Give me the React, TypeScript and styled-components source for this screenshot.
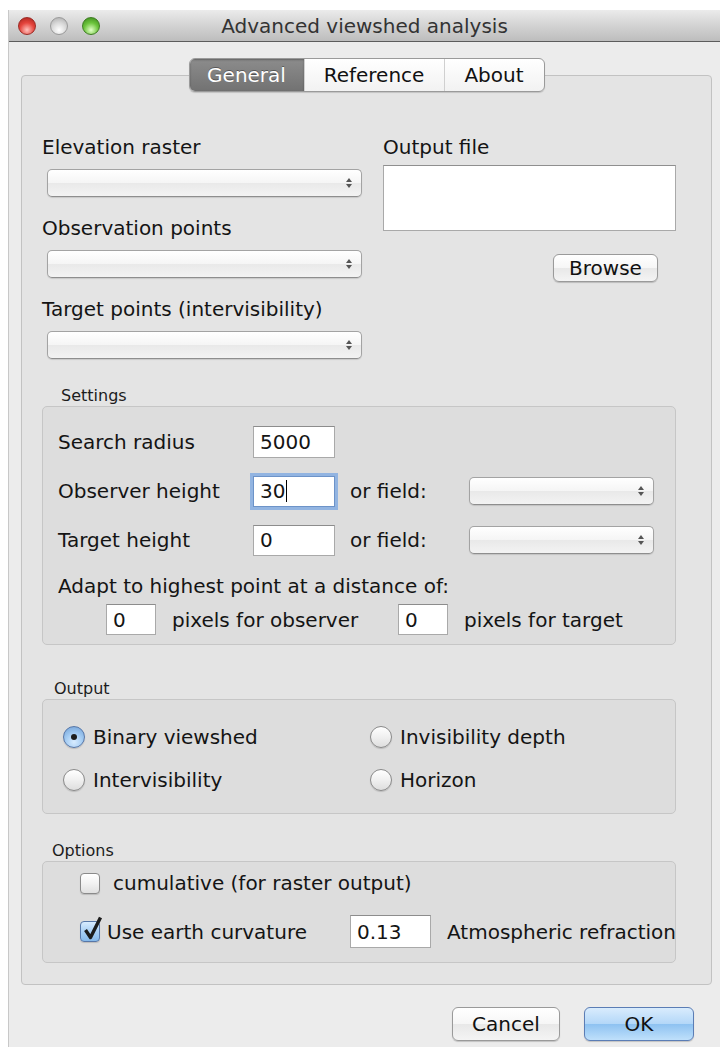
import React from 'react';
import styled, {createGlobalStyle, css} from 'styled-components';

const GlobalStyle = createGlobalStyle`
  html, body {
    margin: 0;
    padding: 0;
    background: #ffffff;
  }
  body {
    font-family: "DejaVu Sans", "Liberation Sans", sans-serif;
    color: #141414;
  }
`;

const Window = styled.div`
  margin: 10px 0 0 9px;
  width: 711px;
  height: 1037px;
  background: #ececec;
  box-shadow: -1px 0 0 #c8c8c8;
  display: flex;
  flex-direction: column;
`;

const TitleBar = styled.div`
  height: 31px;
  display: flex;
  align-items: center;
  position: relative;
  background: linear-gradient(#ebebeb, #d3d3d3 50%, #bdbdbd);
  border-bottom: 1px solid #5c5c5c;
  padding-left: 9px;
  gap: 14px;
`;

const Light = styled.span<{tone: 'close' | 'idle' | 'zoom'}>`
  width: 18px;
  height: 18px;
  border-radius: 50%;
  box-sizing: border-box;
  ${p => p.tone === 'close' && css`
    background: radial-gradient(circle at 50% 75%, #ffc2bd, #e5453d 50%, #a6201a);
    border: 1px solid #9c2b25;
  `}
  ${p => p.tone === 'idle' && css`
    background: radial-gradient(circle at 50% 75%, #ffffff, #d9d9d9 50%, #a9a9a9);
    border: 1px solid #9a9a9a;
  `}
  ${p => p.tone === 'zoom' && css`
    background: radial-gradient(circle at 50% 75%, #e2ffc8, #6cc43c 50%, #38851a);
    border: 1px solid #3e7d22;
  `}
`;

const Title = styled.div`
  position: absolute;
  left: 0;
  right: 0;
  text-align: center;
  font-size: 20px;
  color: #333;
  pointer-events: none;
`;

const Body = styled.div`
  flex: 1;
  display: flex;
  flex-direction: column;
  padding: 16px 8px 0 12px;
`;

const TabStrip = styled.div`
  display: flex;
  justify-content: center;
  position: relative;
  z-index: 1;
`;

const Segments = styled.div`
  display: flex;
  height: 34px;
  box-sizing: border-box;
  border: 1px solid #9a9a9a;
  border-radius: 6px;
  overflow: hidden;
  background: linear-gradient(#ffffff, #f2f2f2);
  box-shadow: 0 1px 1px rgba(0, 0, 0, 0.15);
`;

const Segment = styled.div<{width: number; active?: boolean}>`
  width: ${p => p.width}px;
  display: flex;
  align-items: center;
  justify-content: center;
  font-size: 20px;
  color: #111;
  & + & {
    border-left: 1px solid #d0d0d0;
  }
  ${p => p.active && css`
    background: linear-gradient(#8c8c8c, #727272);
    color: #ffffff;
    text-shadow: 0 -1px 0 rgba(0, 0, 0, 0.35);
    box-shadow: inset 0 1px 2px rgba(0, 0, 0, 0.3);
  `}
`;

const TabBox = styled.div`
  margin-top: -17px;
  height: 910px;
  box-sizing: border-box;
  background: #e4e4e4;
  border: 1px solid #c2c2c2;
  border-radius: 4px;
  padding: 60px 35px 0 20px;
`;

const TopArea = styled.div`
  display: grid;
  grid-template-columns: 320px 293px;
  column-gap: 21px;
`;

const Column = styled.div`
  display: flex;
  flex-direction: column;
`;

const FieldLabel = styled.div<{gap?: number}>`
  font-size: 20px;
  line-height: 22px;
  margin-top: ${p => p.gap ?? 0}px;
  white-space: nowrap;
`;

const PopUp = styled.div<{width: number; gap?: number; inset?: number}>`
  width: ${p => p.width}px;
  height: 28px;
  box-sizing: border-box;
  margin-top: ${p => p.gap ?? 0}px;
  margin-left: ${p => p.inset ?? 0}px;
  border: 1px solid #a3a3a3;
  border-bottom-color: #8e8e8e;
  border-radius: 5px;
  background: linear-gradient(#ffffff, #f5f5f5 50%, #e9e9e9 51%, #f3f3f3);
  box-shadow: 0 1px 1px rgba(0, 0, 0, 0.12);
  display: flex;
  align-items: center;
  justify-content: flex-end;
  padding-right: 8px;
`;

const Stepper = () => (
  <svg width="8" height="12" viewBox="0 0 8 12">
    <path d="M4 1 L7 5 L1 5 Z" fill="#555"/>
    <path d="M4 11 L7 7 L1 7 Z" fill="#555"/>
  </svg>
);

const FileBox = styled.div`
  margin-top: 7px;
  height: 64px;
  background: #ffffff;
  border: 1px solid #a9a9a9;
  border-top-color: #8f8f8f;
`;

const PushButton = styled.button<{width: number; height: number; primary?: boolean}>`
  width: ${p => p.width}px;
  height: ${p => p.height}px;
  font-family: inherit;
  font-size: 20px;
  color: #111;
  border: 1px solid #9a9a9a;
  border-radius: 6px;
  background: linear-gradient(#ffffff, #f6f6f6 50%, #e8e8e8 51%, #f4f4f4);
  box-shadow: 0 1px 1px rgba(0, 0, 0, 0.18);
  padding: 0;
  ${p => p.primary && css`
    border-color: #5b7db5;
    background: linear-gradient(#d9ecfd, #b3d7f8 50%, #8ec2f1 51%, #bfe0fb);
  `}
`;

const BrowseRow = styled.div`
  display: flex;
  justify-content: flex-end;
  margin-top: 23px;
  padding-right: 18px;
`;

const GroupTitle = styled.div<{gap: number; indent: number}>`
  font-size: 16px;
  line-height: 18px;
  margin-top: ${p => p.gap}px;
  padding-left: ${p => p.indent}px;
  color: #1c1c1c;
`;

const GroupBox = styled.div`
  margin-top: 1px;
  background: #dddddd;
  border: 1px solid #c6c6c6;
  border-radius: 5px;
`;

const SettingsBox = styled(GroupBox)`
  padding: 19px 21px 9px 15px;
`;

const SettingsGrid = styled.div`
  display: grid;
  grid-template-columns: 195px 82px 134px 185px;
  grid-auto-rows: 32px;
  row-gap: 17px;
  align-items: center;
`;

const RowLabel = styled.div<{pad?: number}>`
  font-size: 20px;
  line-height: 22px;
  padding-left: ${p => p.pad ?? 0}px;
  white-space: nowrap;
`;

const TextField = styled.div<{width: number; height: number; focused?: boolean}>`
  width: ${p => p.width}px;
  height: ${p => p.height}px;
  box-sizing: border-box;
  background: #ffffff;
  border: 1px solid #a9a9a9;
  border-top-color: #8c8c8c;
  font-size: 20px;
  padding-left: 6px;
  display: flex;
  align-items: center;
  ${p => p.focused && css`
    border-color: #6d93c8;
    box-shadow: 0 0 0 3px rgba(120, 165, 225, 0.75);
  `}
`;

const Caret = styled.span`
  display: inline-block;
  width: 1px;
  height: 22px;
  margin-left: 1px;
  background: #000;
`;

const AdaptText = styled.div`
  font-size: 20px;
  line-height: 22px;
  margin-top: 19px;
`;

const AdaptRow = styled.div`
  display: grid;
  grid-template-columns: 50px 210px 50px auto;
  column-gap: 16px;
  align-items: center;
  margin-top: 7px;
  padding-left: 48px;
`;

const OutputBox = styled(GroupBox)`
  padding: 25px 0 21px 20px;
  display: grid;
  grid-template-columns: 307px auto;
  grid-auto-rows: 24px;
  row-gap: 19px;
`;

const RadioItem = styled.div`
  display: flex;
  align-items: center;
  gap: 8px;
  font-size: 20px;
`;

const RadioDot = styled.span<{checked?: boolean}>`
  width: 22px;
  height: 22px;
  box-sizing: border-box;
  border-radius: 50%;
  border: 1px solid #8a8a8a;
  background: linear-gradient(#ffffff, #f0f0f0 50%, #dedede);
  box-shadow: 0 1px 1px rgba(0, 0, 0, 0.15);
  display: flex;
  align-items: center;
  justify-content: center;
  ${p => p.checked && css`
    border-color: #5777a8;
    background: radial-gradient(circle at 50% 75%, #d8ecff, #a6cdf3 45%, #6e9fd6);
    &::after {
      content: '';
      width: 6px;
      height: 6px;
      border-radius: 50%;
      background: #1d1d1d;
    }
  `}
`;

const OptionsBox = styled(GroupBox)`
  padding: 9px 0 14px 37px;
  display: flex;
  flex-direction: column;
  gap: 20px;
`;

const OptionRow = styled.div<{gap: number}>`
  display: flex;
  align-items: center;
  gap: ${p => p.gap}px;
  font-size: 20px;
  min-height: 22px;
  white-space: nowrap;
`;

const CurvatureRow = styled.div`
  display: grid;
  grid-template-columns: 270px 81px auto;
  align-items: center;
  font-size: 20px;
`;

const Check = styled.span<{checked?: boolean}>`
  position: relative;
  width: 20px;
  height: 21px;
  box-sizing: border-box;
  border-radius: 4px;
  border: 1px solid #8a8a8a;
  background: linear-gradient(#ffffff, #f2f2f2 50%, #e0e0e0);
  box-shadow: 0 1px 1px rgba(0, 0, 0, 0.15);
  flex: none;
  ${p => p.checked && css`
    border-color: #5777a8;
    background: linear-gradient(#d8ecff, #a9cff4 50%, #86b9ea);
  `}
`;

const Tick = styled.svg`
  position: absolute;
  left: 2px;
  top: -6px;
`;

const Footer = styled.div`
  display: flex;
  justify-content: flex-end;
  gap: 24px;
  margin-top: 22px;
  padding-right: 18px;
`;

function App() {
  return (
    <>
      <GlobalStyle/>
      <Window>
        <TitleBar>
          <Light tone="close"/>
          <Light tone="idle"/>
          <Light tone="zoom"/>
          <Title>Advanced viewshed analysis</Title>
        </TitleBar>
        <Body>
          <TabStrip>
            <Segments>
              <Segment width={114} active>General</Segment>
              <Segment width={139}>Reference</Segment>
              <Segment width={99}>About</Segment>
            </Segments>
          </TabStrip>
          <TabBox>
            <TopArea>
              <Column>
                <FieldLabel>Elevation raster</FieldLabel>
                <PopUp width={315} gap={11} inset={5}><Stepper/></PopUp>
                <FieldLabel gap={20}>Observation points</FieldLabel>
                <PopUp width={315} gap={11} inset={5}><Stepper/></PopUp>
                <FieldLabel gap={20}>Target points (intervisibility)</FieldLabel>
                <PopUp width={315} gap={11} inset={5}><Stepper/></PopUp>
              </Column>
              <Column>
                <FieldLabel>Output file</FieldLabel>
                <FileBox/>
                <BrowseRow>
                  <PushButton width={105} height={28}>Browse</PushButton>
                </BrowseRow>
              </Column>
            </TopArea>

            <GroupTitle gap={28} indent={19}>Settings</GroupTitle>
            <SettingsBox>
              <SettingsGrid>
                <RowLabel>Search radius</RowLabel>
                <TextField width={82} height={32}>5000</TextField>
                <span/>
                <span/>

                <RowLabel>Observer height</RowLabel>
                <TextField width={82} height={31} focused>30<Caret/></TextField>
                <RowLabel pad={15}>or field:</RowLabel>
                <PopUp width={185}><Stepper/></PopUp>

                <RowLabel>Target height</RowLabel>
                <TextField width={82} height={31}>0</TextField>
                <RowLabel pad={15}>or field:</RowLabel>
                <PopUp width={185}><Stepper/></PopUp>
              </SettingsGrid>
              <AdaptText>Adapt to highest point at a distance of:</AdaptText>
              <AdaptRow>
                <TextField width={50} height={31}>0</TextField>
                <RowLabel>pixels for observer</RowLabel>
                <TextField width={50} height={31}>0</TextField>
                <RowLabel>pixels for target</RowLabel>
              </AdaptRow>
            </SettingsBox>

            <GroupTitle gap={35} indent={12}>Output</GroupTitle>
            <OutputBox>
              <RadioItem><RadioDot checked/>Binary viewshed</RadioItem>
              <RadioItem><RadioDot/>Invisibility depth</RadioItem>
              <RadioItem><RadioDot/>Intervisibility</RadioItem>
              <RadioItem><RadioDot/>Horizon</RadioItem>
            </OutputBox>

            <GroupTitle gap={28} indent={10}>Options</GroupTitle>
            <OptionsBox>
              <OptionRow gap={13}>
                <Check/>
                cumulative (for raster output)
              </OptionRow>
              <CurvatureRow>
                <OptionRow gap={7}>
                  <Check checked>
                    <Tick width="20" height="25" viewBox="0 0 20 25">
                      <path d="M2.5 14 L7.5 21.5 L17.5 1.5" fill="none" stroke="#1b1b1b" strokeWidth="3.4" strokeLinejoin="round"/>
                    </Tick>
                  </Check>
                  Use earth curvature
                </OptionRow>
                <TextField width={81} height={33}>0.13</TextField>
                <RowLabel pad={16}>Atmospheric refraction</RowLabel>
              </CurvatureRow>
            </OptionsBox>
          </TabBox>
          <Footer>
            <PushButton width={108} height={34}>Cancel</PushButton>
            <PushButton width={110} height={34} primary>OK</PushButton>
          </Footer>
        </Body>
      </Window>
    </>
  );
}

export default App;
